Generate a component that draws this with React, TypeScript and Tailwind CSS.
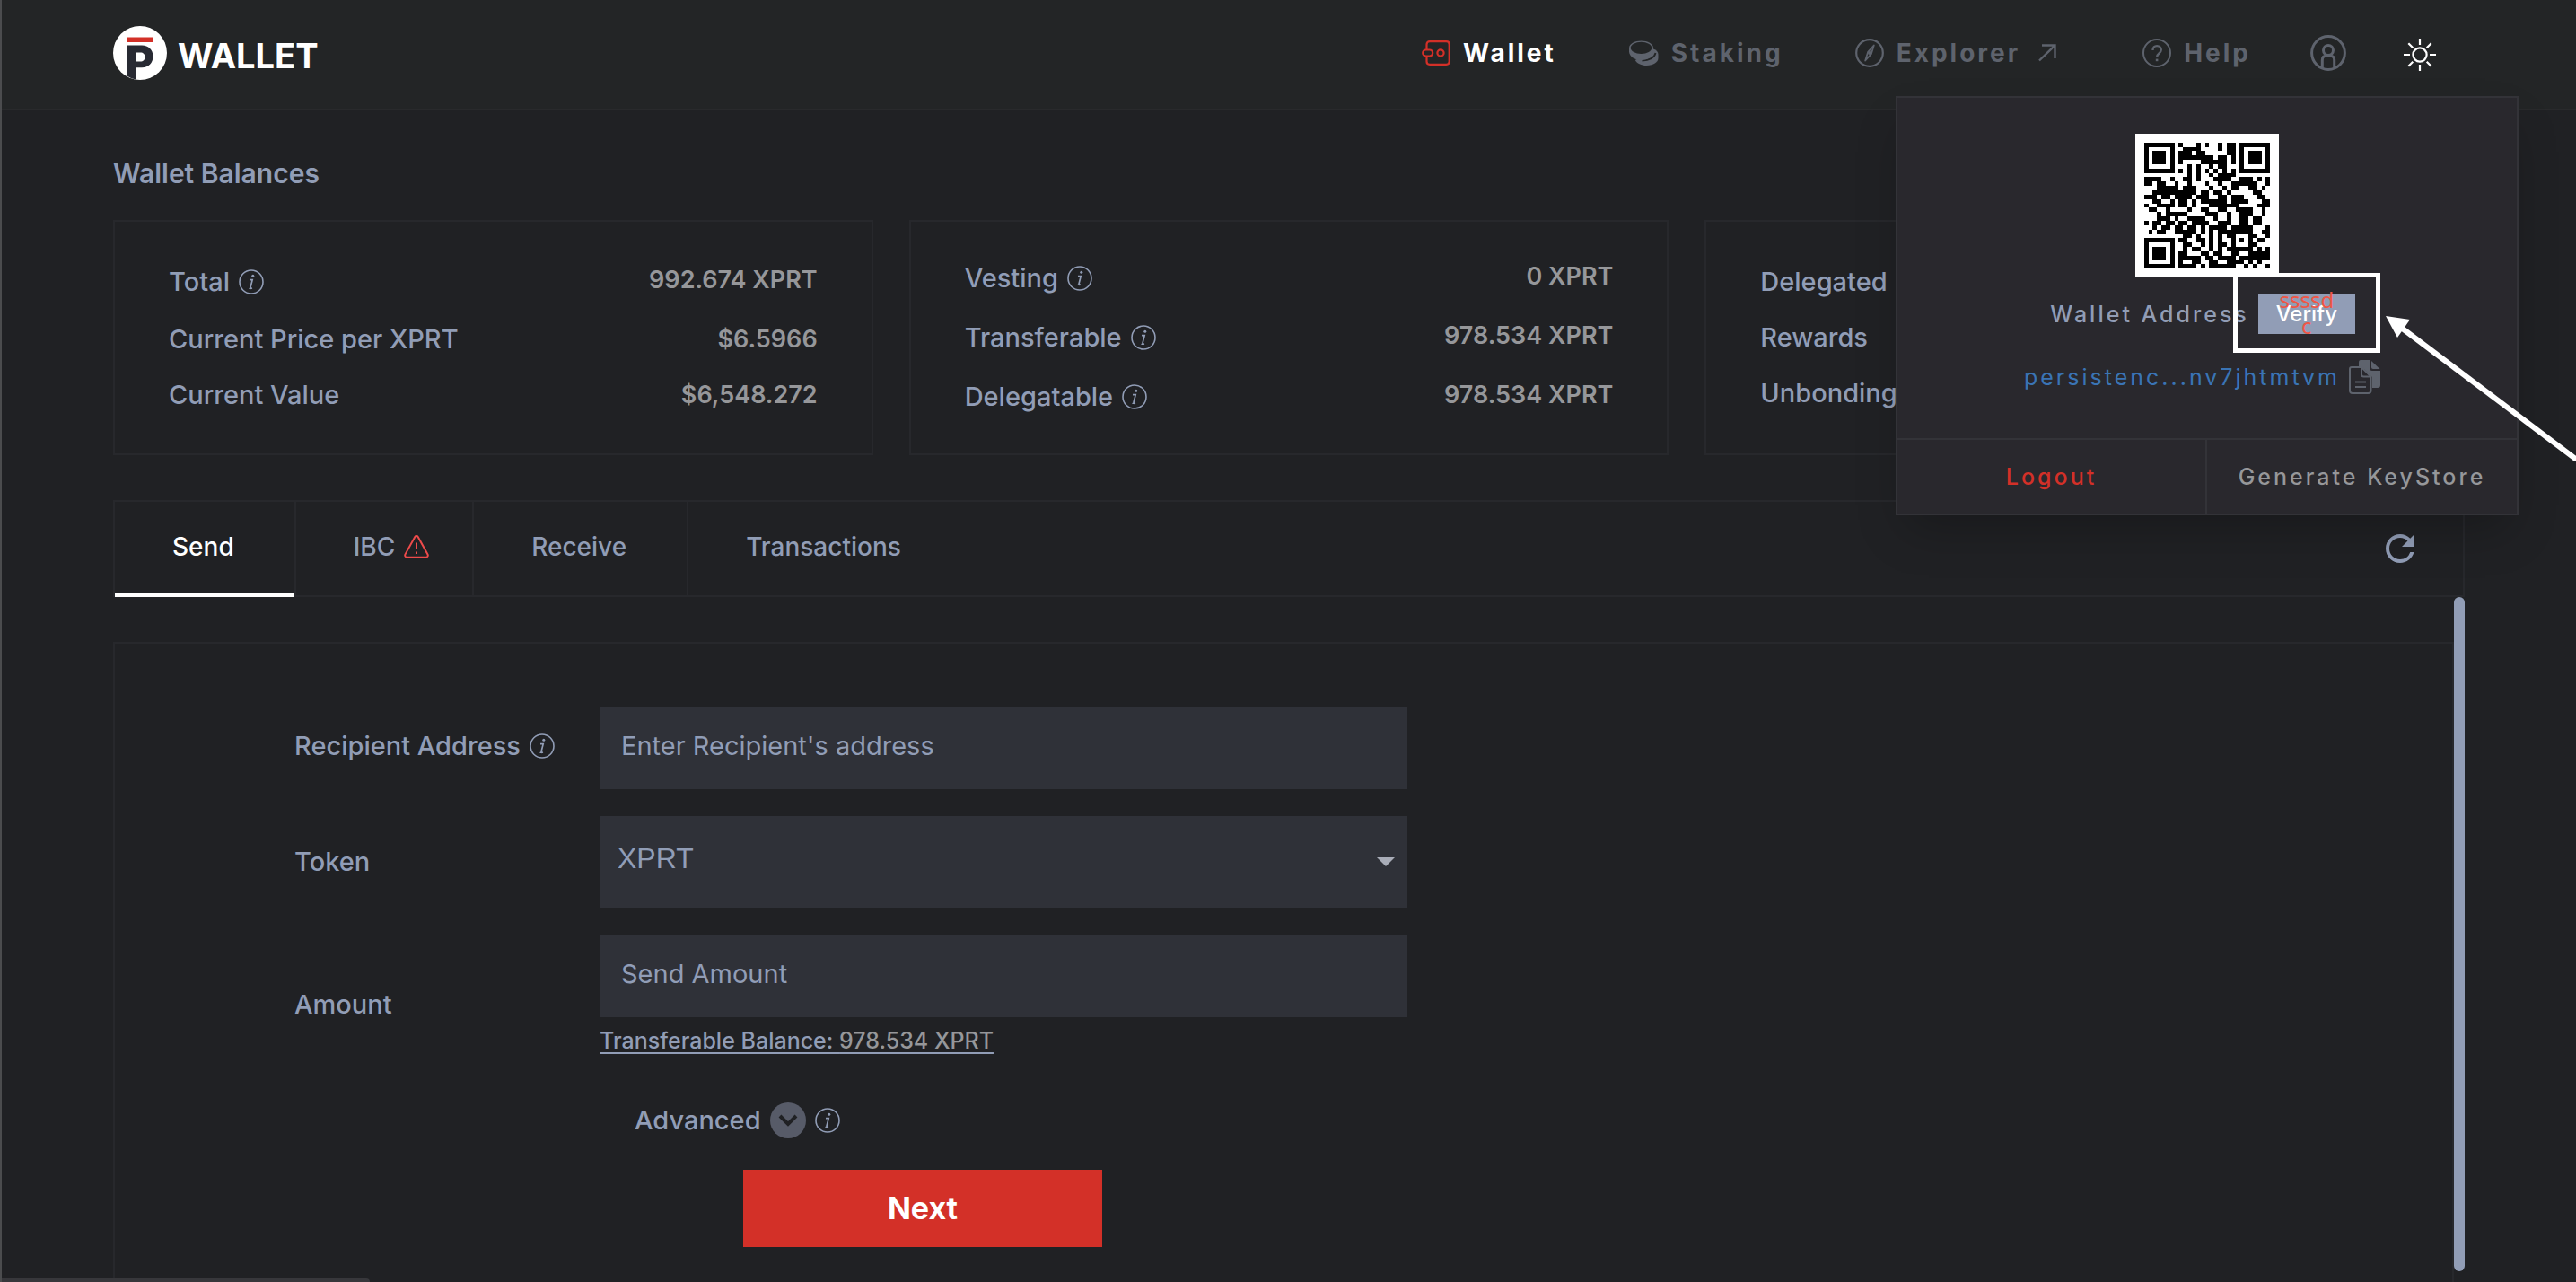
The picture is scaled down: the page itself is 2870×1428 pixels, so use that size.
import type { ReactNode } from "react";

const qrRows = [
  "11111110100010100101101111111",
  "10000010011110000101101000001",
  "10111010111011000001101011101",
  "10111010111111110110101011101",
  "10111010100001111110101011101",
  "10000010001010010110001000001",
  "11111110101010101010101111111",
  "00000000001010010111100000000",
  "11110010011010001111001110101",
  "11011001001000100100111111001",
  "00011111011100010010110011010",
  "00111111111101101101000001100",
  "11101101111011100110111000110",
  "00110010110101111110111100011",
  "10011110110100011111110000111",
  "01100100001001100110011110010",
  "00010111110000111001001110010",
  "00011101001111001001001101100",
  "10110110110111100111001101100",
  "00101101101101011110111110001",
  "01011001111101010111111100011",
  "00000000011010010101100011001",
  "11111110110011010100101010110",
  "10000010011001010110100011000",
  "10111010010110010101111110101",
  "10111010110001101100110011111",
  "10111010111110110111101111111",
  "10000010100110011001111010100",
  "11111110111101011111100101001",
];

function QrCode() {
  return (
    <svg viewBox="-2 -2 33 33" className="size-[160px] bg-white" shapeRendering="crispEdges" role="img" aria-label="Wallet address QR code">
      {qrRows.map((row, y) =>
        row.split("").map((cell, x) => (cell === "1" ? <rect key={`${x}-${y}`} x={x} y={y} width="1" height="1" fill="#000" /> : null)),
      )}
      <path d="M20 20h5v5h-5z" fill="#000" />
      <path d="M21 21h3v3h-3z" fill="#fff" />
      <path d="M22 22h1v1h-1z" fill="#000" />
    </svg>
  );
}

function InfoIcon() {
  return (
    <svg viewBox="0 0 28 28" className="size-7 shrink-0" fill="none" stroke="currentColor" aria-hidden="true">
      <circle cx="14" cy="14" r="13" strokeWidth="1.6" />
      <circle cx="15.8" cy="7.3" r="1.5" fill="currentColor" stroke="none" />
      <path d="M12 11.6h3.2l-2.2 8.6c-.3 1.3.6 1.4 1.8.6" strokeWidth="1.7" />
      <path d="M11.4 21.4h3" strokeWidth="1.2" />
    </svg>
  );
}

function Logo() {
  return (
    <a href="#" className="flex items-center gap-3 text-white">
      <svg viewBox="0 0 60 60" className="size-[60px]" aria-hidden="true">
        <circle cx="30" cy="30" r="30" fill="#fff" />
        <path d="M15.500 12.500h29v5.500h-29z" fill="#d33028" />
        <path fillRule="evenodd" d="M15.500 21.500h16.500c7.500 0 12.500 5 12.500 12.300s-5 12.400-12.500 12.400h-7v13.400c-3.500-.7-6.600-2-9.500-4zM25 29.500v10h5.500c3 0 5-2 5-5s-2-5-5-5z" fill="#282a33" />
      </svg>
      <span className="pt-1.5 text-[38px] leading-[60px] font-bold">WALLET</span>
    </a>
  );
}

function WalletIcon() {
  return (
    <svg viewBox="0 0 32 28" className="h-7 w-8" fill="none" stroke="#d33028" strokeWidth="2.2" aria-hidden="true">
      <path d="M5.500 10V4.500c0-2 1.300-3.300 3.300-3.300h18.600c2 0 3.300 1.300 3.300 3.300v19c0 2-1.300 3.300-3.300 3.300H8.800c-2 0-3.300-1.300-3.300-3.300V18" />
      <rect x="1.200" y="10.500" width="11" height="7" rx="3.500" />
      <circle cx="21" cy="14" r="3.600" />
    </svg>
  );
}

function StakingIcon() {
  return (
    <svg viewBox="0 0 34 28" className="h-7 w-[34px]" aria-hidden="true">
      <path d="M28 9.500c3.500 1 5.500 3.300 5.500 6.300v4c0 4.500-5.500 8.200-13 8.200-6 0-11-2.500-12.700-6z" fill="currentColor" />
      <path d="M30.500 14c-1 5-7 8.500-15 8.500" fill="none" stroke="#232526" strokeWidth="1.800" />
      <path d="M1 8.500c0-4.600 6-8 13.500-8S28 4 28 8.500v4c0 5-6 9.500-13.500 9.500S1 17.500 1 12.500z" fill="currentColor" />
      <ellipse cx="14.500" cy="8.300" rx="11.800" ry="6.600" fill="#232526" />
    </svg>
  );
}

function ExplorerIcon() {
  return (
    <svg viewBox="0 0 32 32" className="size-8" fill="none" stroke="currentColor" aria-hidden="true">
      <circle cx="16" cy="16" r="14.800" strokeWidth="2.200" />
      <path d="M20.800 7.500l-3 9.700-6.600 7.300 3-9.700z" strokeWidth="1.800" strokeLinejoin="round" />
      <circle cx="16" cy="16" r="2" fill="currentColor" stroke="none" />
    </svg>
  );
}

function HelpIcon() {
  return (
    <svg viewBox="0 0 32 32" className="size-8" fill="none" stroke="currentColor" aria-hidden="true">
      <circle cx="16" cy="16" r="15" strokeWidth="2" />
      <path d="M11.500 13c0-3 1.900-4.900 4.600-4.900s4.700 1.900 4.700 4.400c0 4.300-4.700 3.600-4.700 8.100" strokeWidth="2.400" />
      <path d="M16.100 22.600v2.600" strokeWidth="2.600" />
    </svg>
  );
}

function UserIcon() {
  return (
    <svg viewBox="0 0 40 40" className="size-10" fill="none" stroke="currentColor" strokeWidth="3" aria-hidden="true">
      <circle cx="20" cy="20" r="18.400" />
      <circle cx="20" cy="17" r="5.500" />
      <path d="M13.300 37v-9c0-3 1.700-4.800 4.500-4.800h4.400c2.800 0 4.500 1.800 4.500 4.800v9" />
    </svg>
  );
}

function SunIcon() {
  return (
    <svg viewBox="0 0 36 36" className="mt-1 size-9" fill="none" stroke="#fff" strokeWidth="2.200" aria-hidden="true">
      <circle cx="18" cy="18" r="7.600" />
      <path d="M18 0v7M18 29v7M0 18h7M29 18h7M5.300 5.300l5 5M25.700 25.700l5 5M5.300 30.700l5-5M25.700 10.300l5-5" />
    </svg>
  );
}

function CopyIcon() {
  return (
    <svg viewBox="0 0 36 38" className="h-[38px] w-9" aria-hidden="true">
      <path d="M13 0h10v9c0 2 1 3 3 3h9v16c0 2-1 3-3 3h-6V19l-9-9h-6V3c0-2 .5-3 2-3z" fill="#5e636d" />
      <path d="M25 1l9.500 9H27c-1.300 0-2-.7-2-2z" fill="#5e636d" />
      <path d="M3 8h11l10.500 10.500V34c0 2-1 3-3 3H4c-2 0-3-1-3-3V10c0-1.300.7-2 2-2z" fill="#29282d" stroke="#5e636d" strokeWidth="2" />
      <path d="M14 8v8c0 1.500.8 2.500 2.500 2.500h8M7 24.500h12M7 30h12" fill="none" stroke="#5e636d" strokeWidth="2" />
    </svg>
  );
}

function NavLink({ icon, label, active, trailing }: { icon: ReactNode; label: string; active?: boolean; trailing?: ReactNode }) {
  return (
    <a href="#" className={`flex items-center gap-3.5 text-[28px] leading-[42px] font-bold tracking-[3px] ${active ? "text-white" : "text-[#5e636d]"}`}>
      {icon}
      <span>{label}</span>
      {trailing}
    </a>
  );
}

type Balance = { label: string; value: string; info?: boolean };

const cards: Balance[][] = [
  [
    { label: "Total", value: "992.674 XPRT", info: true },
    { label: "Current Price per XPRT", value: "$6.5966" },
    { label: "Current Value", value: "$6,548.272" },
  ],
  [
    { label: "Vesting", value: "0 XPRT", info: true },
    { label: "Transferable", value: "978.534 XPRT", info: true },
    { label: "Delegatable", value: "978.534 XPRT", info: true },
  ],
  [
    { label: "Delegated", value: "" },
    { label: "Rewards", value: "" },
    { label: "Unbonding", value: "" },
  ],
];

function BalanceCard({ rows }: { rows: Balance[] }) {
  return (
    <dl className="flex h-[262px] flex-col justify-center border-2 border-[#27282c] px-[60px]">
      {rows.map((row) => (
        <div key={row.label} className="flex justify-between leading-[62px]">
          <dt className={`flex items-center gap-2.5 text-[29px] font-medium ${row.info ? "h-[66px]" : "h-[62px]"}`}>
            {row.label}
            {row.info && <InfoIcon />}
          </dt>
          <dd className="text-[27px] font-semibold text-[#96979a]">{row.value}</dd>
        </div>
      ))}
    </dl>
  );
}

function AccountMenu() {
  return (
    <section aria-label="Account" className="absolute top-[107px] right-16 z-10 w-[694px] border-2 border-[#333338] bg-[#29282d] text-[25px] font-medium tracking-[3px] shadow-2xl">
      <div className="flex flex-col items-center border-b-2 border-[#333338] pt-10 pb-11">
        <QrCode />
        <div className="mt-[18px] flex items-center gap-2.5 pr-2.5 leading-[44px]">
          <span>Wallet Address</span>
          <div className="relative">
            <button className="h-11 w-[108px] bg-[#919db6] text-2xl tracking-normal text-white">Verify</button>
            <span className="absolute inset-x-5 -top-2 text-center font-['Noto_Sans',sans-serif] text-2xl leading-[29px] font-normal tracking-normal text-[#f05545]">
              ssssd
              <br />c
            </span>
            <span className="absolute -top-[23px] -right-7 -bottom-[21px] -left-7 border-[5px] border-white" />
            <svg viewBox="0 0 216 166" className="absolute top-5 left-[140px] h-[166px] w-[216px]" aria-hidden="true">
              <path d="M18 17l198 149" stroke="#fff" strokeWidth="6" />
              <path d="M2 5l27 4-14 20z" fill="#fff" />
            </svg>
          </div>
        </div>
        <div className="mt-6 flex items-center gap-2.5 pr-2.5 leading-[48px]">
          <span className="font-normal text-[#3a74b5]">persistenc...nv7jhtmtvm</span>
          <button aria-label="Copy address">
            <CopyIcon />
          </button>
        </div>
      </div>
      <div className="grid grid-cols-2 leading-[82px]">
        <button className="border-r-2 border-[#333338] tracking-[3px] text-[#d33028]">Logout</button>
        <button className="tracking-[3px] text-[#96979a]">Generate KeyStore</button>
      </div>
    </section>
  );
}

const tabClass = "border-r-2 border-[#27282c] pl-16 pb-1 text-[28px] leading-[100px] font-medium";

export default function App() {
  return (
    <div className="relative flex h-screen flex-col overflow-hidden border-l-2 border-[#4b4c4e] bg-[#202124] font-['Inter',sans-serif] text-[#919db6]">
      <header className="flex h-[123px] shrink-0 items-center justify-between border-b-2 border-[#292a2c] bg-[#232526] pr-[156px] pb-1 pl-[124px]">
        <Logo />
        <nav className="flex items-center text-[#5e636d]">
          <NavLink icon={<WalletIcon />} label="Wallet" active />
          <div className="ml-20">
            <NavLink icon={<StakingIcon />} label="Staking" />
          </div>
          <div className="ml-20">
            <NavLink
              icon={<ExplorerIcon />}
              label="Explorer"
              trailing={
                <svg viewBox="0 0 20 20" className="ml-1.5 size-5" fill="none" stroke="currentColor" strokeWidth="2.400" aria-hidden="true">
                  <path d="M1 18.500L18 2M4 1.500h14.500V16" />
                </svg>
              }
            />
          </div>
          <div className="ml-24">
            <NavLink icon={<HelpIcon />} label="Help" />
          </div>
          <button aria-label="Account" className="ml-[66px]">
            <UserIcon />
          </button>
          <button aria-label="Light theme" className="ml-16">
            <SunIcon />
          </button>
        </nav>
      </header>

      <AccountMenu />

      <main className="flex min-h-0 flex-1 flex-col px-[124px]">
        <h1 className="mt-[49px] text-[30px] leading-[42px] font-semibold">Wallet Balances</h1>
        <div className="mt-[31px] grid grid-cols-3 gap-10">
          {cards.map((rows) => (
            <BalanceCard key={rows[0].label} rows={rows} />
          ))}
        </div>

        <div className="mt-[50px] flex h-[108px] shrink-0 items-stretch border-2 border-[#27282c]">
          <button className={`${tabClass} relative pr-[67px] text-white`}>
            Send
            <span className="absolute inset-x-0 -bottom-0.5 h-1 bg-white" />
          </button>
          <button className={`${tabClass} flex items-center gap-2.5 pr-12`}>
            IBC
            <svg viewBox="0 0 28 26" className="h-[26px] w-7" fill="none" stroke="#ee4b4b" strokeWidth="2" strokeLinejoin="round" aria-hidden="true">
              <path d="M12.300 2c.8-1.300 2.600-1.300 3.400 0l10.800 19.400c.8 1.500-.2 3.300-1.800 3.300H3.300c-1.600 0-2.600-1.800-1.800-3.300z" />
              <path d="M14 8.500v7.500M14 18.500v2.400" />
            </svg>
          </button>
          <button className={`${tabClass} pr-[67px]`}>Receive</button>
          <button className="px-16 pb-1 text-[28px] leading-[100px] font-medium">Transactions</button>
          <button aria-label="Refresh" className="mr-[46px] ml-auto">
            <svg viewBox="0 0 24 24" className="size-12" fill="currentColor" aria-hidden="true">
              <path d="M17.650 6.350A7.958 7.958 0 0 0 12 4c-4.420 0-7.990 3.580-7.990 8s3.570 8 7.990 8c3.730 0 6.840-2.550 7.730-6h-2.080A5.990 5.990 0 0 1 12 18c-3.310 0-6-2.690-6-6s2.690-6 6-6c1.660 0 3.140.690 4.220 1.780L13 11h7V4l-2.350 2.350z" />
            </svg>
          </button>
        </div>

        <div className="flex min-h-0 flex-1">
          <div className="mt-[50px] flex-1 overflow-hidden border-2 border-b-0 border-[#27282c] pt-[70px] pl-[200px]">
            <form className="w-[1240px] text-[29px] leading-[42px] font-medium">
              <div className="grid grid-cols-[340px_1fr] items-center gap-y-[30px]">
                <label htmlFor="recipient" className="flex items-center gap-2.5 pb-1">
                  Recipient Address
                  <InfoIcon />
                </label>
                <input id="recipient" placeholder="Enter Recipient's address" className="h-[92px] w-full bg-[#2f3138] px-6 pb-1.5 font-normal placeholder:text-[#919db6]" />
                <label htmlFor="token">Token</label>
                <div className="relative">
                  <select id="token" className="h-[102px] w-full appearance-none bg-[#2f3138] px-5 pb-2 font-['Liberation_Sans',Arial,sans-serif] text-[32px] font-normal">
                    <option>XPRT</option>
                  </select>
                  <svg viewBox="0 0 20 10" className="pointer-events-none absolute top-[46px] right-3.5 h-2.5 w-5" fill="#a9adb8" aria-hidden="true">
                    <path d="M0 0h20L10 10z" />
                  </svg>
                </div>
                <label htmlFor="amount">Amount</label>
                <div className="h-[156px]">
                  <input id="amount" placeholder="Send Amount" className="h-[92px] w-full bg-[#2f3138] px-6 pb-1.5 font-normal placeholder:text-[#919db6]" />
                  <p className="mt-2 text-[25px] leading-9 underline underline-offset-4">
                    Transferable Balance: <span className="text-[#96979a]">978.534 XPRT</span>
                  </p>
                </div>
              </div>
              <div className="mt-[30px] ml-[379px] flex items-center gap-2.5">
                Advanced
                <button type="button" aria-label="Show advanced options" className="flex size-10 items-center justify-center rounded-full bg-[#575b68]">
                  <svg viewBox="0 0 22 14" className="h-3.5 w-[22px]" fill="none" stroke="#202124" strokeWidth="4" aria-hidden="true">
                    <path d="M2 2l9 9 9-9" />
                  </svg>
                </button>
                <InfoIcon />
              </div>
              <button type="button" className="mt-[34px] ml-[500px] h-[86px] w-[400px] bg-[#d33028] text-[34px] font-bold text-white">
                Next
              </button>
            </form>
          </div>
          <div className="mb-3 w-3 rounded-full bg-[#919db6]" />
        </div>
      </main>
      <div className="absolute bottom-0 left-0 h-1 w-[410px] rounded-tr bg-[#37373b]" />
    </div>
  );
}
